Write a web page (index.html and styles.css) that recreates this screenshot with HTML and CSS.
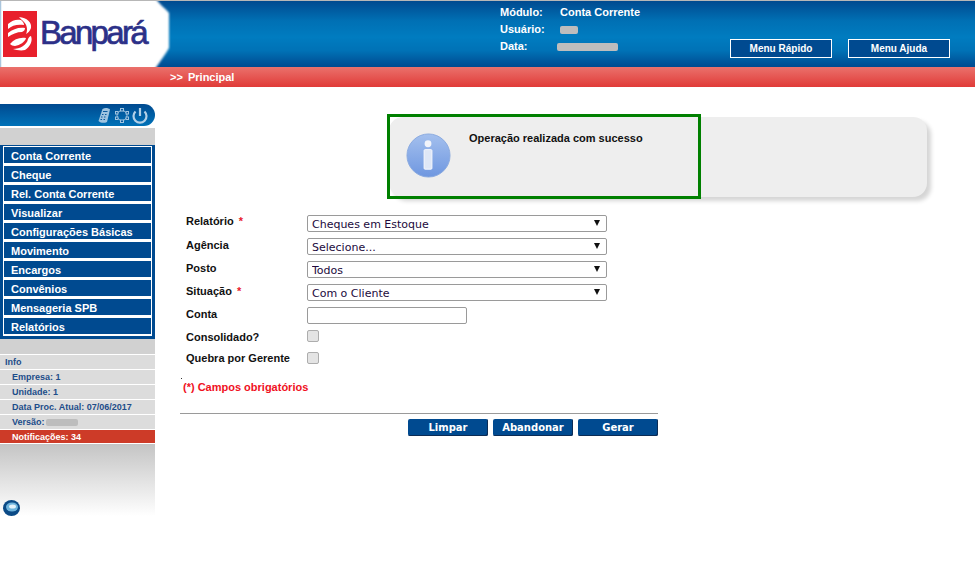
FILE: index.html
```html
<!DOCTYPE html>
<html lang="pt-BR">

<head>
    <meta charset="UTF-8">
    <title>Banpará - Conta Corrente</title>
    <link rel="stylesheet" href="styles.css">
</head>

<body>
    <header class="topo">
        <svg class="logo" width="172" height="66" viewBox="0 0 172 66">
            <defs>
                <filter id="borrar"><feGaussianBlur stdDeviation="0.8"></feGaussianBlur></filter>
            </defs>
            <path d="M0 -2H156C160 4 165 7 169 12V47C165 54 161 59 155 68H0Z" fill="#fff" filter="url(#borrar)"></path>
            <rect x="3" y="10" width="34" height="46" fill="#e8202c"></rect>
            <g fill="#fff" transform="translate(0 -1)">
                <path d="M19 17C27 18 32 22 31 28C30 31 28 33 26 34C28 30 27 25 24 22C22 20 20 18 19 17Z"></path>
                <path d="M8 24C12 20 17 19 21 20C23 22 24 23 24 25C18 24 12 25 8 29Z"></path>
                <path d="M8 33C13 29 19 27 25 28C25 30 24 31 22 32C17 32 12 34 8 37Z"></path>
                <path d="M10 44C14 39 20 37 26 38C25 42 20 45 15 46C13 46 11 45 10 44Z"></path>
                <path d="M13 49C20 49 27 45 28 39C29 37 30 36 31 36C33 41 30 47 25 50C21 51 16 50 13 49Z"></path>
            </g>
            <text x="40" y="43" class="logo-texto">Banpará</text>
        </svg>
        <div class="dados">
            <span class="rotulo">Módulo:</span><span>Conta Corrente</span>
            <span class="rotulo">Usuário:</span><span><i class="oculto usuario"></i></span>
            <span class="rotulo">Data:</span><span><i class="oculto data"></i></span>
        </div>
        <nav class="menus">
            <a class="btn-topo">Menu Rápido</a>
            <a class="btn-topo">Menu Ajuda</a>
        </nav>
    </header>
    <div class="trilha">&gt;&gt;&nbsp; Principal</div>

    <div class="corpo">
        <aside class="lateral">
            <div class="acoes">
                <svg width="58" height="22" viewBox="0 0 58 22">
                    <!-- calculadora -->
                    <path d="M1.500 17L5.500 5C8 3.500 11.500 4 13 5.500L10 18C7 19.500 3.500 19 1.500 17Z" fill="#9fc4e0"></path>
                    <path d="M6 7.500H10.500M5 10.500H6.500M8 10.500H9.500M4 13H5.500M7 13H8.500M3.500 15.500H5M6.500 15.500H8" stroke="#0a5a9e" stroke-width="1" fill="none"></path>
                    <!-- engrenagem -->
                    <circle cx="25" cy="11.500" r="5" fill="none" stroke="#9fc4e0" stroke-width="1"></circle>
                    <g fill="#0a5a9e" stroke="#9fc4e0" stroke-width="1">
                        <rect x="23.500" y="4.500" width="3" height="2.500"></rect>
                        <rect x="23.500" y="16" width="3" height="2.500"></rect>
                        <rect x="18.500" y="7.500" width="2.500" height="2.500"></rect>
                        <rect x="29" y="7.500" width="2.500" height="2.500"></rect>
                        <rect x="18.500" y="13" width="2.500" height="2.500"></rect>
                        <rect x="29" y="13" width="2.500" height="2.500"></rect>
                    </g>
                    <!-- desligar -->
                    <path d="M38.500 7.500A6.500 6.500 0 1 0 47.500 7.500" stroke="#b3d0e8" stroke-width="2.200" fill="none"></path>
                    <path d="M43 4V12" stroke="#b3d0e8" stroke-width="2.200"></path>
                </svg>
            </div>
            <div class="faixa faixa-alta"></div>
            <ul class="menu">
                <li>Conta Corrente</li>
                <li>Cheque</li>
                <li>Rel. Conta Corrente</li>
                <li>Visualizar</li>
                <li>Configurações Básicas</li>
                <li>Movimento</li>
                <li>Encargos</li>
                <li>Convênios</li>
                <li>Mensageria SPB</li>
                <li>Relatórios</li>
            </ul>
            <div class="faixa"></div>
            <ul class="info">
                <li class="titulo">Info</li>
                <li>Empresa: 1</li>
                <li>Unidade: 1</li>
                <li>Data Proc. Atual: 07/06/2017</li>
                <li>Versão: <i class="oculto versao"></i></li>
                <li class="alerta">Notificações: 34</li>
            </ul>
            <div class="rodape">
                <svg class="bola" width="22" height="22" viewBox="0 0 22 22">
                    <ellipse cx="11.500" cy="11" rx="8.500" ry="8" fill="#0b4a86"></ellipse>
                    <ellipse cx="12" cy="10" rx="6" ry="4.500" fill="#6fb4dc"></ellipse>
                    <ellipse cx="12.500" cy="9.500" rx="3.500" ry="2" fill="#e4f2fa"></ellipse>
                </svg>
            </div>
        </aside>

        <main class="conteudo">
            <div class="mensagem">
                <div class="destaque"></div>
                <svg class="icone-info" width="45" height="45" viewBox="0 0 46 46">
                    <defs>
                        <linearGradient id="azul" x1="0" y1="0" x2="0" y2="1">
                            <stop offset="0" stop-color="#a4c0ee"></stop>
                            <stop offset="1" stop-color="#6f97e0"></stop>
                        </linearGradient>
                    </defs>
                    <circle cx="23" cy="23" r="22" fill="url(#azul)" stroke="#8aaadf"></circle>
                    <circle cx="22.500" cy="11" r="3.500" fill="#f2f4fa"></circle>
                    <rect x="18.500" y="17" width="8" height="20" rx="1" fill="#dfe7f6" stroke="#f7f8fc"></rect>
                </svg>
                <p>Operação realizada com sucesso</p>
            </div>

            <form class="formulario">
                <label class="l1">Relatório <b>*</b></label>
                <div class="caixa"><select><option>Cheques em Estoque</option></select></div>
                <label>Agência</label>
                <div class="caixa"><select><option>Selecione...</option></select></div>
                <label>Posto</label>
                <div class="caixa"><select><option>Todos</option></select></div>
                <label>Situação <b>*</b></label>
                <div class="caixa"><select><option>Com o Cliente</option></select></div>
                <label>Conta</label>
                <input type="text">
                <label>Consolidado?</label>
                <input type="checkbox">
                <label class="l1">Quebra por Gerente</label>
                <input type="checkbox">
            </form>

            <p class="obrigatorio">(*) Campos obrigatórios</p>

            <div class="botoes">
                <button type="button">Limpar</button>
                <button type="button">Abandonar</button>
                <button type="button">Gerar</button>
            </div>
        </main>
    </div>
</body>

</html>
```
FILE: styles.css
```css
* {
    box-sizing: border-box;
}

html,
body {
    height: 561px;
    overflow: hidden;
}

body {
    margin: 0;
    background: #fff;
    font-family: "Liberation Sans", Arial, sans-serif;
    font-size: 11px;
}

.topo {
    display: flex;
    height: 67px;
    border-top: 1px solid #b7b7b7;
    background: linear-gradient(#004a90 0%, #0070b4 30%, #007cc0 55%, #0072b6 75%, #004a90 100%);
    color: #fff;
    overflow: hidden;
}

.logo {
    flex: none;
}

.logo-texto {
    font-family: "Liberation Sans", Arial, sans-serif;
    font-size: 33px;
    letter-spacing: -2.700px;
    fill: #2c3088;
    stroke: #2c3088;
    stroke-width: 0.700px;
}

.dados {
    display: grid;
    grid-template-columns: 60px 160px;
    grid-auto-rows: 17px;
    align-items: center;
    margin: 2px 0 0 328px;
    align-self: flex-start;
    font-size: 11px;
    font-weight: bold;
}

.oculto {
    display: inline-block;
    background: #bdbdbd;
    border-radius: 2px;
    vertical-align: middle;
}

.usuario {
    width: 18px;
    height: 8px;
}

.data {
    width: 61px;
    height: 8px;
    margin-left: -3px;
}

.versao {
    width: 32px;
    height: 7px;
    margin-left: -1px;
}

.menus {
    display: flex;
    gap: 16px;
    margin: 38px 0 0 10px;
    align-self: flex-start;
}

.btn-topo {
    width: 102px;
    height: 19px;
    border: 1px solid #fff;
    background: #004a90;
    font-size: 10px;
    font-weight: bold;
    line-height: 17px;
    text-align: center;
}

.trilha {
    height: 20px;
    padding-left: 170px;
    background: linear-gradient(#ea716c, #e03b38);
    color: #fff;
    font-weight: bold;
    line-height: 20px;
    word-spacing: -0.500px;
}

.corpo {
    display: flex;
}

.lateral {
    flex: none;
    width: 155px;
    margin-top: 17px;
}

.acoes {
    display: flex;
    justify-content: flex-end;
    height: 22px;
    margin-bottom: 2px;
    border-radius: 0 11px 11px 0;
    background: linear-gradient(#004a90, #0072b8);
}

.faixa {
    height: 15px;
    background: #d1d1d1;
}

.faixa-alta {
    height: 17px;
}

.menu {
    margin: 0;
    padding: 1px 3px 3px;
    list-style: none;
    background: #004a90;
}

.menu li {
    height: 19px;
    padding-left: 7px;
    border: 1px solid #fff;
    border-bottom-width: 2px;
    color: #fff;
    font-weight: bold;
    line-height: 18px;
}

.info {
    margin: 0;
    padding: 0;
    list-style: none;
    font-size: 9px;
    font-weight: bold;
    color: #1d4d8a;
}

.info li {
    height: 15px;
    padding-left: 12px;
    border-top: 1px solid #fff;
    background: #dcdcdc;
    line-height: 14px;
}

.info .titulo {
    padding-left: 5px;
}

.info .alerta {
    background: #cd3b28;
    border-bottom: 1px solid #fff;
    color: #fff;
}

.rodape {
    display: flex;
    align-items: flex-end;
    height: 72px;
    background: linear-gradient(#c4c4c4, #fff);
}

.bola {
    flex: none;
    margin-bottom: -3px;
}

.conteudo {
    flex: none;
    width: 820px;
    padding-left: 25px;
}

.mensagem {
    position: relative;
    display: flex;
    width: 538px;
    height: 80px;
    margin: 30px 0 0 209px;
    padding: 16px 0 0 17px;
    border-radius: 14px;
    background: #eee;
    box-shadow: 4px 4px 4px #d5d5d5;
}

.destaque {
    position: absolute;
    top: -3px;
    left: -2px;
    width: 314px;
    height: 85px;
    border: 3px solid #008000;
}

.mensagem p {
    margin: -1px 0 0 18px;
    font-weight: bold;
    color: #111;
}

.formulario {
    display: grid;
    grid-template-columns: 121px 300px;
    align-items: start;
    margin: 18px 0 0 6px;
}

.formulario label {
    padding-top: 1px;
    color: #111;
    font-weight: bold;
    line-height: 13px;
}

.formulario .l1 {
    padding-top: 0;
}

.formulario label b {
    margin-left: 2px;
    color: #e8202c;
}

.caixa {
    position: relative;
    height: 17px;
    margin-bottom: 6px;
}

.caixa::after {
    content: "";
    position: absolute;
    top: 5px;
    right: 7px;
    border: 3.500px solid transparent;
    border-top: 6px solid #111;
    border-bottom: 0;
}

select {
    display: block;
    width: 100%;
    height: 17px;
    padding: 2px 0 0 4px;
    border: 1px solid #9a9a9a;
    border-radius: 2px;
    appearance: none;
    background: #fff;
    color: #220a3c;
    font-family: "DejaVu Sans", sans-serif;
    font-size: 11px;
}

input[type="text"] {
    display: block;
    width: 160px;
    height: 17px;
    margin: 0 0 6px;
    border: 1px solid #9a9a9a;
    border-radius: 2px;
}

input[type="checkbox"] {
    display: block;
    width: 12px;
    height: 12px;
    margin: 0 0 10px;
    border: 1px solid #adadad;
    border-radius: 2px;
    appearance: none;
    background: #e4e4e4;
}

.obrigatorio {
    position: relative;
    margin: 7px 0 0 3px;
    color: #f0101e;
    font-weight: bold;
}

.obrigatorio::before {
    content: "";
    position: absolute;
    top: -3px;
    left: -2px;
    width: 1px;
    height: 1px;
    background: #333;
}

.botoes {
    display: flex;
    justify-content: flex-end;
    gap: 5px;
    width: 478px;
    margin-top: 20px;
    padding-top: 5px;
    border-top: 1px solid #9a9a9a;
}

.botoes button {
    width: 80px;
    height: 17px;
    padding: 0;
    border: 0;
    border-radius: 2px;
    background: #004a90;
    box-shadow: inset -1px -1px 0 #0c2c55;
    color: #fff;
    font-family: "DejaVu Sans", sans-serif;
    font-size: 10px;
    font-weight: bold;
}
```
